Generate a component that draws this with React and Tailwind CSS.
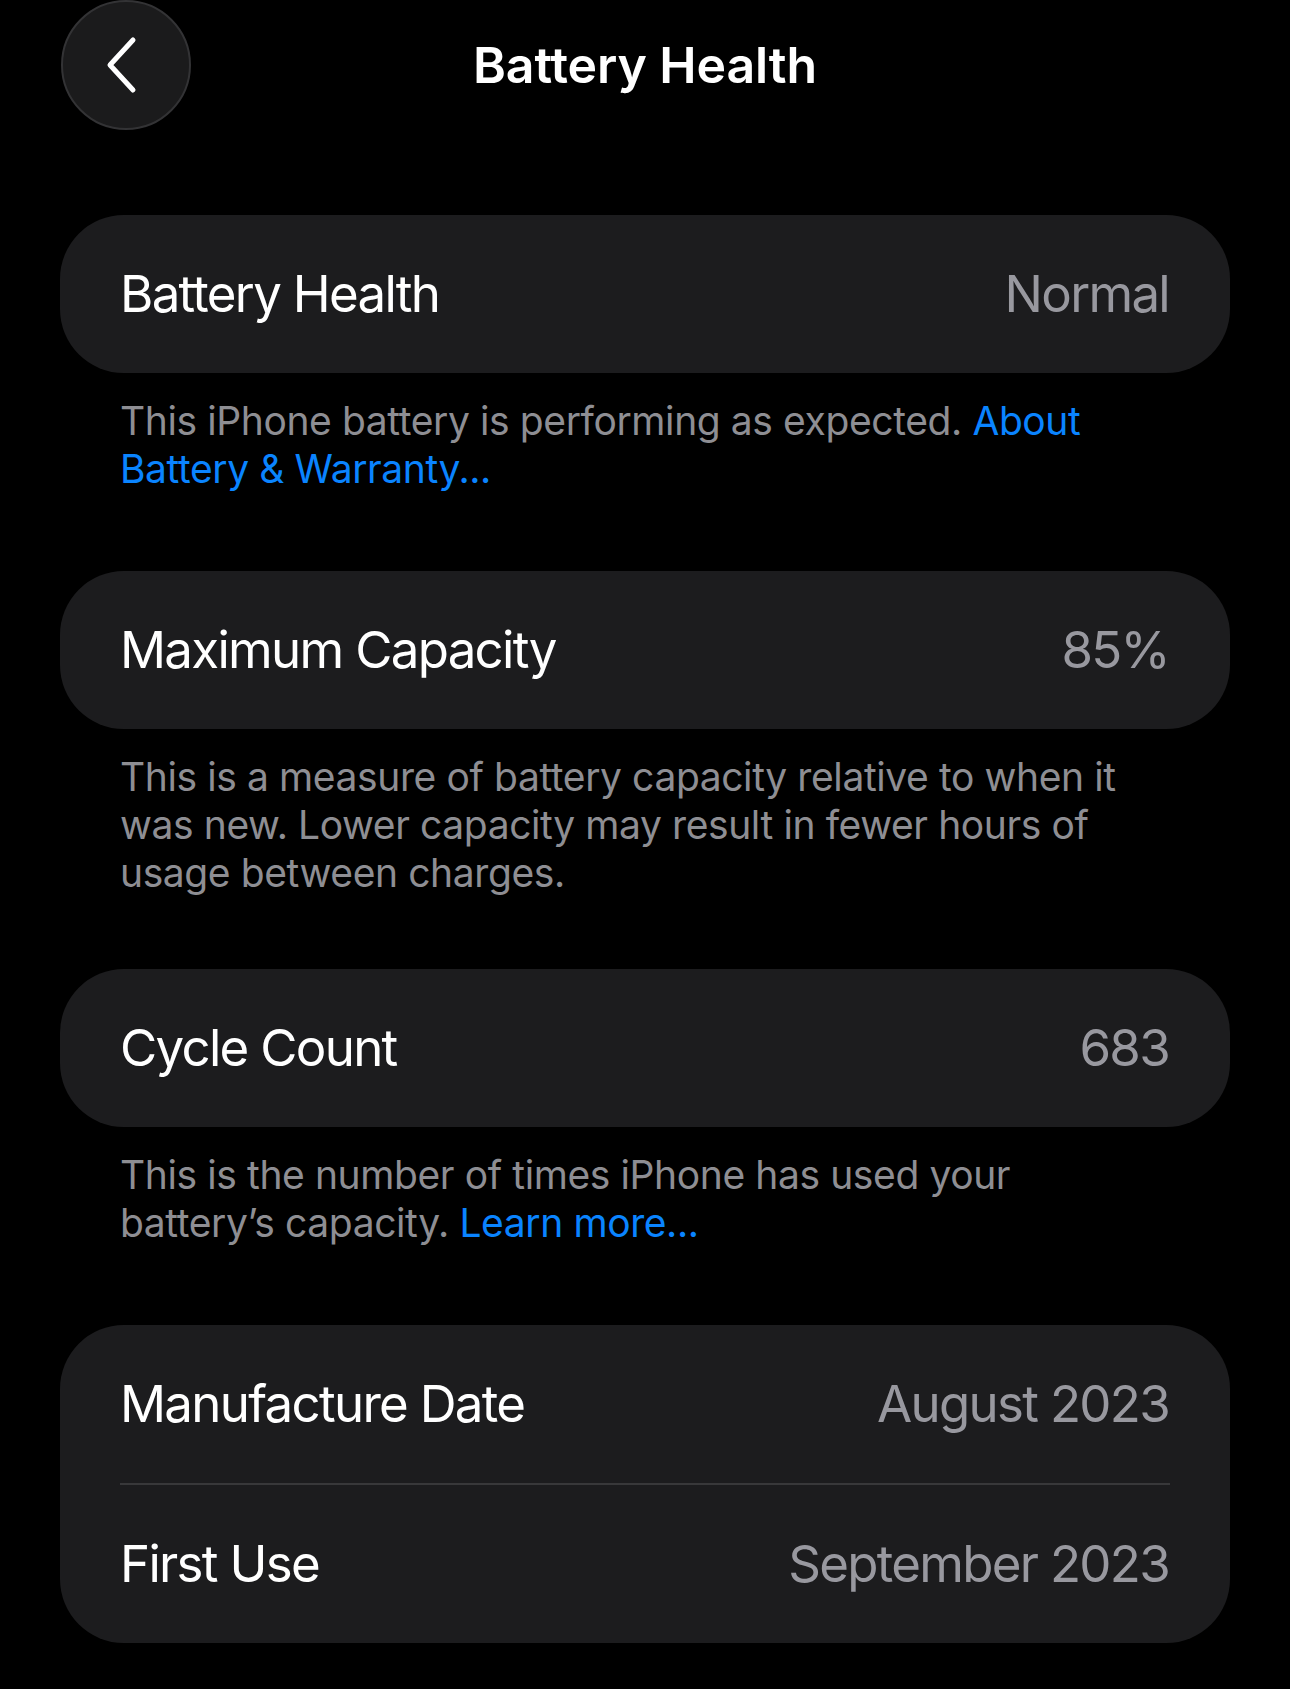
import { Fragment } from 'react'

const sections = [
  {
    rows: [{ label: 'Battery Health', value: 'Normal' }],
    note: (
      <>
        This iPhone battery is performing as expected.{' '}
        <span className="text-[#0a84ff]">About Battery &amp; Warranty...</span>
      </>
    ),
  },
  {
    rows: [{ label: 'Maximum Capacity', value: '85%' }],
    note: 'This is a measure of battery capacity relative to when it was new. Lower capacity may result in fewer hours of usage between charges.',
  },
  {
    rows: [{ label: 'Cycle Count', value: '683' }],
    note: (
      <>
        This is the number of times iPhone has used your battery’s capacity.{' '}
        <span className="text-[#0a84ff]">Learn more...</span>
      </>
    ),
  },
  {
    rows: [
      { label: 'Manufacture Date', value: 'August 2023' },
      { label: 'First Use', value: 'September 2023' },
    ],
  },
]

// gap above each grouped card
const sectionGap = ['', 'mt-[78px]', 'mt-[72px]', 'mt-[78px]']

export default function App() {
  return (
    <div className="min-h-screen w-[1290px] bg-black px-[60px] pb-10 font-['Inter','Liberation_Sans',sans-serif] text-white">
      {/* Nav bar */}
      <nav className="relative flex h-[131px] items-center justify-center">
        <button className="absolute left-[1px] top-0 flex h-[130px] w-[130px] items-center justify-center rounded-full border-2 border-[#333335] bg-[#1b1b1c]">
          <svg width="40" height="60" viewBox="0 0 40 60" fill="none" className="-ml-[8px]">
            <path d="M31 5 L8 30 L31 55" stroke="white" strokeWidth="5" strokeLinecap="round" strokeLinejoin="round" />
          </svg>
        </button>
        <h1 className="text-[50px] font-semibold tracking-[-0.1px]">Battery Health</h1>
      </nav>

      <div className="mt-[84px]">
        {sections.map((section, i) => (
          <section key={i} className={sectionGap[i]}>
            <div className="rounded-[64px] bg-[#1c1c1e]">
              {section.rows.map((row, j) => (
                <Fragment key={row.label}>
                  {j > 0 && <div className="mx-[60px] h-[2px] bg-[#38383a]" />}
                  <Row label={row.label} value={row.value} />
                </Fragment>
              ))}
            </div>
            {section.note && (
              <p className="mt-[24px] pl-[60px] pr-[62px] text-[39px] leading-[48px] tracking-[-0.4px] text-[#8e8e93]">
                {section.note}
              </p>
            )}
          </section>
        ))}
      </div>
    </div>
  )
}

function Row({ label, value }) {
  return (
    <div className="flex h-[158px] items-center justify-between pl-[60px] pr-[61px] text-[51px] tracking-[-1.7px]">
      <span className="text-white">{label}</span>
      <span className="text-[#98989f]">{value}</span>
    </div>
  )
}
